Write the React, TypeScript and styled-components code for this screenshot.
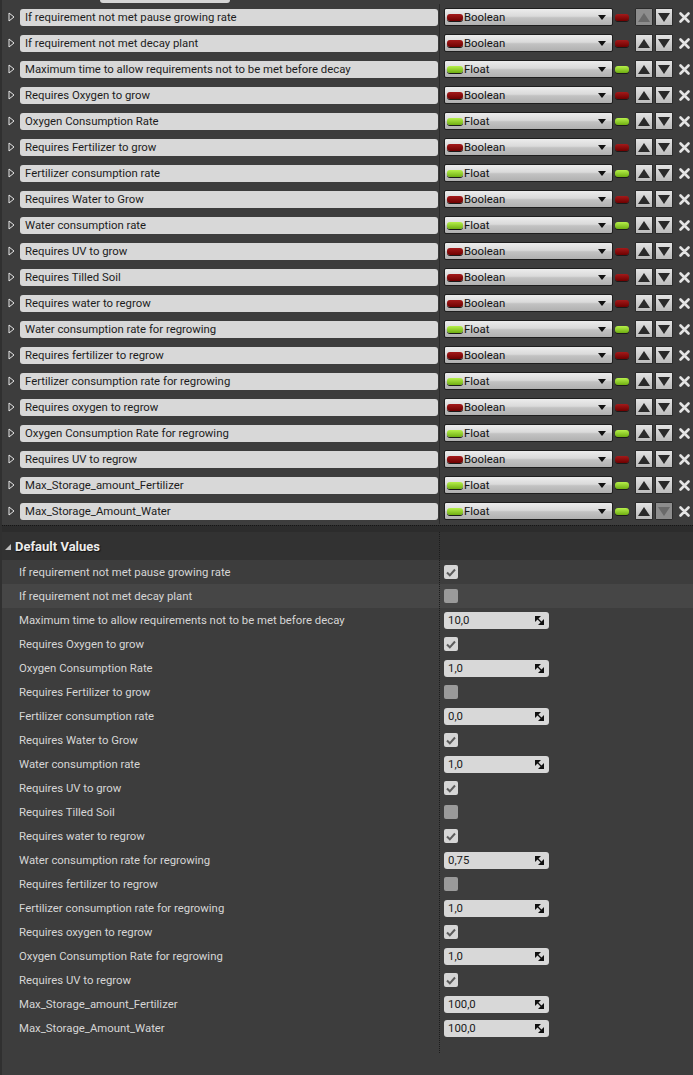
import React from 'react';
import styled, {createGlobalStyle} from "styled-components";

type PinType = 'Boolean' | 'Float'

interface Variable {
    name: string;
    type: PinType;
    value: boolean | string;
}

const variables: Variable[] = [
    {name: 'If requirement not met pause growing rate', type: 'Boolean', value: true},
    {name: 'If requirement not met decay plant', type: 'Boolean', value: false},
    {name: 'Maximum time to allow requirements not to be met before decay', type: 'Float', value: '10,0'},
    {name: 'Requires Oxygen to grow', type: 'Boolean', value: true},
    {name: 'Oxygen Consumption Rate', type: 'Float', value: '1,0'},
    {name: 'Requires Fertilizer to grow', type: 'Boolean', value: false},
    {name: 'Fertilizer consumption rate', type: 'Float', value: '0,0'},
    {name: 'Requires Water to Grow', type: 'Boolean', value: true},
    {name: 'Water consumption rate', type: 'Float', value: '1,0'},
    {name: 'Requires UV to grow', type: 'Boolean', value: true},
    {name: 'Requires Tilled Soil', type: 'Boolean', value: false},
    {name: 'Requires water to regrow', type: 'Boolean', value: true},
    {name: 'Water consumption rate for regrowing', type: 'Float', value: '0,75'},
    {name: 'Requires fertilizer to regrow', type: 'Boolean', value: false},
    {name: 'Fertilizer consumption rate for regrowing', type: 'Float', value: '1,0'},
    {name: 'Requires oxygen to regrow', type: 'Boolean', value: true},
    {name: 'Oxygen Consumption Rate for regrowing', type: 'Float', value: '1,0'},
    {name: 'Requires UV to regrow', type: 'Boolean', value: true},
    {name: 'Max_Storage_amount_Fertilizer', type: 'Float', value: '100,0'},
    {name: 'Max_Storage_Amount_Water', type: 'Float', value: '100,0'},
]

const GlobalStyle = createGlobalStyle`
  html, body {
    margin: 0;
    padding: 0;
    background: #3d3d3d;
    font-family: Roboto, "Liberation Sans", sans-serif;
  }
`

const Page = styled.div`
  width: 693px;
  height: 1075px;
  overflow: hidden;
  background: #3d3d3d;
  border-left: 2px solid #303030;
  box-sizing: border-box;
`

const TopTab = styled.div`
  margin-left: 98px;
  width: 130px;
  height: 3px;
  background: #d6d6d6;
  border-radius: 0 0 3px 3px;
  margin-bottom: 1px;
`

const VarList = styled.div`
  display: flex;
  flex-direction: column;
`

const VarRow = styled.div`
  height: 26px;
  display: flex;
  align-items: center;
  position: relative;

  &::after {
    content: '';
    position: absolute;
    left: 437px;
    top: 0;
    bottom: 0;
    width: 1px;
    background: #2a2a2a;
  }
`

const Expander = styled.div`
  width: 17px;
  display: flex;
  justify-content: center;
  padding-left: 1px;
`

const NameBox = styled.div`
  width: 418px;
  height: 17px;
  background: #d8d8d8;
  border-radius: 3px;
  color: #1c1c1c;
  font-size: 11.35px;
  line-height: 17px;
  padding-left: 5px;
  box-sizing: border-box;
  white-space: nowrap;
  overflow: hidden;
`

const TypeSelect = styled.div`
  margin-left: 6px;
  width: 169px;
  height: 18px;
  box-sizing: border-box;
  border: 1px solid #1e1e1e;
  border-radius: 2px;
  background: linear-gradient(#ececec 0%, #dadada 45%, #c2c2c2 55%, #b0b0b0 100%);
  display: flex;
  align-items: center;
  padding: 0 6px 0 2px;
  font-size: 11.35px;
  color: #111;
`

const TypeLabel = styled.span`
  flex: 1;
  margin-left: 1px;
`

const Caret = styled.span`
  width: 0;
  height: 0;
  border-left: 4px solid transparent;
  border-right: 4px solid transparent;
  border-top: 5px solid #111;
`

const Pin = styled.span<{ $type: PinType, $w?: number }>`
  display: inline-block;
  width: ${({$w}) => $w ?? 14}px;
  height: 7px;
  border-radius: 3px;
  background: ${({$type}) => $type === 'Boolean'
          ? 'linear-gradient(#a31a1a, #6e0000)'
          : 'linear-gradient(#b6f04a, #6fae12)'};
  box-shadow: 0 1px 0 #1a1a1a;
`

const OuterPin = styled.div`
  width: 22px;
  display: flex;
  align-items: center;
  padding-left: 2px;
  box-sizing: border-box;
`

const ArrowButton = styled.div<{ $disabled?: boolean }>`
  width: 18px;
  height: 18px;
  box-sizing: border-box;
  border: 1px solid #2b2b2b;
  border-radius: 1px;
  background: ${({$disabled}) => $disabled
          ? '#8d8d8d'
          : 'linear-gradient(#e2e2e2, #bcbcbc)'};
  display: flex;
  align-items: center;
  justify-content: center;
  margin-right: 2px;
`

const UpTri = styled.span<{ $disabled?: boolean }>`
  width: 0;
  height: 0;
  border-left: 6px solid transparent;
  border-right: 6px solid transparent;
  border-bottom: 9px solid ${({$disabled}) => $disabled ? '#6a6a6a' : '#2a2a2a'};
`

const DownTri = styled.span<{ $disabled?: boolean }>`
  width: 0;
  height: 0;
  border-left: 6px solid transparent;
  border-right: 6px solid transparent;
  border-top: 9px solid ${({$disabled}) => $disabled ? '#6a6a6a' : '#2a2a2a'};
`

const RemoveButton = styled.div`
  margin-left: 3px;
  width: 12px;
  display: flex;
  justify-content: center;
`

const Separator = styled.div`
  height: 7px;
  margin-top: 1px;
  background: #2c2c2c;
  border-top: 1px dotted #151515;
  box-sizing: border-box;
`

const DefaultsPanel = styled.div`
  position: relative;
  padding-bottom: 10px;

  &::after {
    content: '';
    position: absolute;
    left: 437px;
    top: 0;
    height: 521px;
    border-left: 1px dotted #1c1c1c;
  }
`

const Header = styled.div`
  height: 28px;
  background: #323232;
  display: flex;
  align-items: center;
  gap: 4px;
  padding-left: 3px;
  color: #ececec;
  font-size: 13px;
  font-weight: bold;
  text-shadow: 1px 1px 1px #111;
`

const HeaderTri = styled.span`
  width: 0;
  height: 0;
  border-left: 6px solid transparent;
  border-bottom: 6px solid #bdbdbd;
  margin-top: 2px;
`

const DefaultRow = styled.div<{ $hover?: boolean }>`
  height: 24px;
  display: flex;
  align-items: center;
  background: ${({$hover}) => $hover ? '#464646' : 'transparent'};
`

const DefaultLabel = styled.div`
  width: 439px;
  padding-left: 17px;
  box-sizing: border-box;
  color: #d6d6d6;
  font-size: 11.35px;
  white-space: nowrap;
`

const ValueCell = styled.div`
  padding-left: 3px;
  display: flex;
  align-items: center;
`

const CheckBox = styled.div<{ $checked: boolean }>`
  width: 14px;
  height: 14px;
  border-radius: 2px;
  background: ${({$checked}) => $checked ? '#d6d6d6' : '#9a9a9a'};
  display: flex;
  align-items: center;
  justify-content: center;
`

const NumberInput = styled.div`
  width: 105px;
  height: 17px;
  box-sizing: border-box;
  background: #d8d8d8;
  border-radius: 3px;
  display: flex;
  align-items: center;
  justify-content: space-between;
  padding: 0 5px 0 4px;
  color: #1a1a1a;
  font-size: 11.35px;
`

const ExpandTriangle = () => (
    <svg width="7" height="10" viewBox="0 0 7 10">
        <path d="M1 1 L6 5 L1 9 Z" fill="none" stroke="#e6e6e6" strokeWidth="1"/>
    </svg>
)

const Cross = () => (
    <svg width="11" height="11" viewBox="0 0 11 11">
        <path d="M1.5 1.5 L9.5 9.5 M9.5 1.5 L1.5 9.5" stroke="#e4e4e4" strokeWidth="2.6" strokeLinecap="round"/>
    </svg>
)

const Check = () => (
    <svg width="10" height="9" viewBox="0 0 10 9">
        <path d="M1 4.5 L3.8 7.3 L9 1.5" fill="none" stroke="#5c5c5c" strokeWidth="2"/>
    </svg>
)

const SpinIcon = () => (
    <svg width="9" height="9" viewBox="0 0 9 9">
        <path d="M0 0 H6 L0 6 Z" fill="#111"/>
        <path d="M9 9 H3 L9 3 Z" fill="#111"/>
        <path d="M0.5 0.5 L8.5 8.5" stroke="#111" strokeWidth="1.3"/>
    </svg>
)

const App = () => {
    const last = variables.length - 1;

    return (
        <Page>
            <GlobalStyle/>
            <TopTab/>
            <VarList>
                {variables.map((v, i) => (
                    <VarRow key={v.name}>
                        <Expander><ExpandTriangle/></Expander>
                        <NameBox>{v.name}</NameBox>
                        <TypeSelect>
                            <Pin $type={v.type} $w={16}/>
                            <TypeLabel>{v.type}</TypeLabel>
                            <Caret/>
                        </TypeSelect>
                        <OuterPin><Pin $type={v.type}/></OuterPin>
                        <ArrowButton $disabled={i === 0}><UpTri $disabled={i === 0}/></ArrowButton>
                        <ArrowButton $disabled={i === last}><DownTri $disabled={i === last}/></ArrowButton>
                        <RemoveButton><Cross/></RemoveButton>
                    </VarRow>
                ))}
            </VarList>
            <Separator/>
            <DefaultsPanel>
                <Header><HeaderTri/>Default Values</Header>
                {variables.map((v, i) => (
                    <DefaultRow key={v.name} $hover={i === 1}>
                        <DefaultLabel>{v.name}</DefaultLabel>
                        <ValueCell>
                            {typeof v.value === 'boolean'
                                ? <CheckBox $checked={v.value}>{v.value ? <Check/> : null}</CheckBox>
                                : <NumberInput><span>{v.value}</span><SpinIcon/></NumberInput>}
                        </ValueCell>
                    </DefaultRow>
                ))}
            </DefaultsPanel>
        </Page>
    );
};

export default App;
